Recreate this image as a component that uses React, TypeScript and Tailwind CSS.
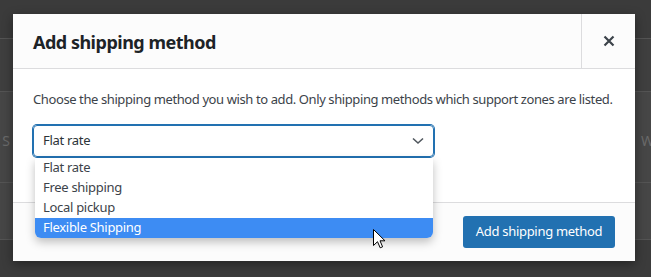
import React from "react";

const font = { fontFamily: '"Noto Sans", "Open Sans", sans-serif' };

function Cursor() {
  return (
    <svg width="13" height="20" viewBox="0 0 13 20" className="absolute left-[373px] top-[229px]">
      <path
        d="M0.5 0.5 L0.5 16.5 L4.5 12.7 L7.2 18.8 L9.6 17.8 L7 11.8 L12 11.8 Z"
        fill="#ffffff"
        stroke="#000000"
        strokeWidth="1"
        strokeLinejoin="round"
      />
    </svg>
  );
}

export default function App() {
  return (
    <div
      className="relative w-[651px] h-[277px] overflow-hidden bg-[#3b3b3b] text-[13px] tracking-[-0.3px]"
      style={font}
    >
      {/* dimmed page behind */}
      <div className="flex flex-col pt-[38px]">
        <div className="h-[53px] border-t border-[#545454] bg-[#3f3f3f]" />
        <div className="h-[91px] border-t border-[#545454] bg-[#464646] flex items-center justify-between pt-[6px]">
          <span className="text-[#6a6a6a] -ml-[17px] text-[14px]">ne S</span>
          <span className="text-[#6a6a6a] -mr-[6px] text-[14px]">Wi</span>
        </div>
        <div className="h-[58px] border-t border-b border-[#545454] bg-[#464646]" />
      </div>

      {/* modal */}
      <div className="absolute left-[13px] top-[14px] w-[622px] h-[247px] bg-white flex flex-col shadow-[0_3px_10px_rgba(0,0,0,0.4)]">
        <div className="h-[55px] shrink-0 flex bg-[#fcfcfc] border-b border-[#dcdcde]">
          <h1 className="flex-1 pl-[20px] flex items-center text-[18px] tracking-[-0.5px] font-bold text-[#1d2327] pt-[2px]">
            Add shipping method
          </h1>
          <button className="w-[54px] border-l border-[#dcdcde] flex items-center justify-center">
            <svg width="12" height="12" viewBox="0 0 12 12">
              <path d="M1.5 1.5 L10.5 10.5 M10.5 1.5 L1.5 10.5" stroke="#3c434a" strokeWidth="2.2" />
            </svg>
          </button>
        </div>
        <div className="relative flex-1 flex flex-col px-[20px] pt-[21px]">
          <p className="text-[#3c434a] leading-[18px] whitespace-nowrap tracking-[-0.4px]">
            Choose the shipping method you wish to add. Only shipping methods which support zones are listed.
          </p>
          <div className="mt-[17px] w-[401px] h-[32px] rounded-[4px] border border-[#2271b1] shadow-[0_0_0_1px_#2271b1] flex items-center justify-between pl-[9px] pr-[9px] text-[#2c3338]">
            <span>Flat rate</span>
            <svg width="12" height="8" viewBox="0 0 12 8">
              <path d="M1 1.5 L6 6 L11 1.5" fill="none" stroke="#50575e" strokeWidth="1.6" />
            </svg>
          </div>
        </div>
        <div className="h-[59px] shrink-0 flex items-center justify-end pr-[20px] bg-[#fcfcfc] border-t border-[#dcdcde]">
          <button className="w-[152px] h-[32px] rounded-[3px] bg-[#2271b1] text-white text-[13px]">
            Add shipping method
          </button>
        </div>

        {/* open dropdown list */}
        <div className="absolute left-[22px] top-[144px] w-[398px] bg-white rounded-b-[6px] overflow-hidden shadow-[0_4px_10px_rgba(0,0,0,0.25)] flex flex-col text-[#3c434a]">
          <div className="h-[20px] flex items-center pl-[8px]">Flat rate</div>
          <div className="h-[20px] flex items-center pl-[8px]">Free shipping</div>
          <div className="h-[20px] flex items-center pl-[8px]">Local pickup</div>
          <div className="h-[20px] flex items-center pl-[8px] bg-[#3d8cf3] text-white">Flexible Shipping</div>
        </div>
      </div>
      <Cursor />
    </div>
  );
}
